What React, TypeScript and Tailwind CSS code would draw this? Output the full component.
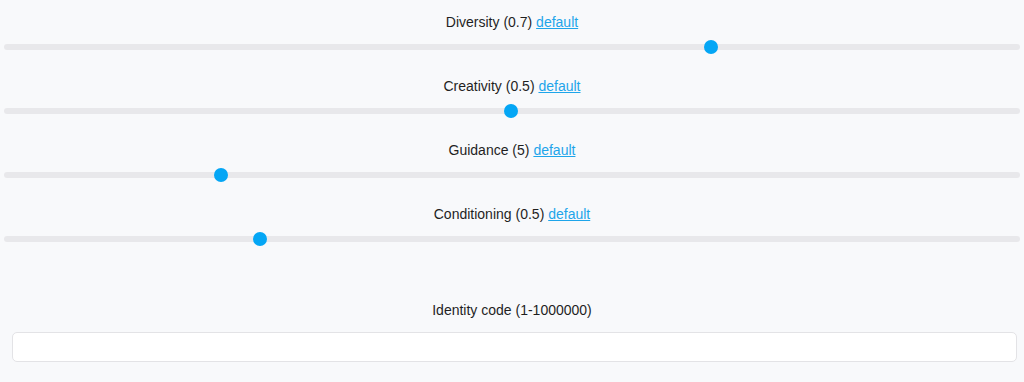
import React from 'react';

interface SliderProps {
  label: string;
  value: number;
  pos: number;
}

const Slider = ({ label, value, pos }: SliderProps) => {
  return (
    <div className="flex flex-col">
      <div className="h-5 flex items-center justify-center text-[14px] text-[#1f1f1f]">
        <span>
          {label} ({value}){' '}
          <a href="#" className="text-[#1ea5ea] underline">
            default
          </a>
        </span>
      </div>
      <div className="mt-[8px] px-1">
        <div className="relative h-[14px] flex items-center">
          <div className="w-full h-[6px] rounded-full bg-[#e8e8eb]"></div>
          <div
            className="absolute top-0 w-[14px] h-[14px] rounded-full bg-[#04a6f5]"
            style={{ left: `calc((100% - 14px) * ${pos})` }}
          ></div>
        </div>
      </div>
    </div>
  );
};

const App = () => {
  return (
    <div
      className="w-[1024px] h-[382px] bg-[#f8f9fb] pt-[12px] flex flex-col"
      style={{ fontFamily: '"Liberation Sans", Arial, sans-serif' }}
    >
      <div className="flex flex-col gap-[22px]">
        <Slider label="Diversity" value={0.7} pos={0.699} />
        <Slider label="Creativity" value={0.5} pos={0.499} />
        <Slider label="Guidance" value={5} pos={0.21} />
        <Slider label="Conditioning" value={0.5} pos={0.249} />
      </div>
      <div className="mt-[54px] h-5 flex items-center justify-center text-[14px] text-[#1f1f1f]">
        Identity code (1-1000000)
      </div>
      <input
        type="text"
        className="mt-[12px] ml-3 mr-[7px] h-[30px] rounded-[5px] border border-[#e3e3e6] bg-white outline-none px-2 text-[14px]"
      />
    </div>
  );
};

export default App;
